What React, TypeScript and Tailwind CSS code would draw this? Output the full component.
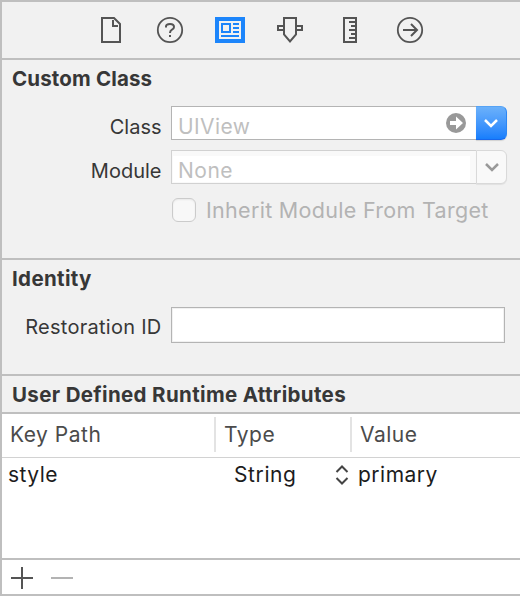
import type { ReactNode } from "react";

function Title({ children }: { children: ReactNode }) {
  return (
    <h2 className="h-6 whitespace-nowrap text-[20.5px] leading-6 font-bold text-[#373737]">{children}</h2>
  );
}

function Label({ children }: { children: ReactNode }) {
  return <span className="block w-[159.5px] shrink-0 whitespace-nowrap text-right text-[20px] leading-6 text-[#373737]">{children}</span>;
}

function Chevron({ color }: { color: string }) {
  return (
    <svg width="14" height="10" viewBox="0 0 14 10" fill="none" stroke={color} strokeWidth="2.5">
      <path d="M1 2 L7 8 L13 2" />
    </svg>
  );
}

function Toolbar() {
  return (
    <nav className="flex h-[58px] shrink-0 items-center border-b-2 border-[#bfbfbf] pl-[94px]">
      <svg width="330" height="30" viewBox="96 15 330 30" fill="none" stroke="#545454" strokeWidth="2">
        <path d="M102 18 H114 L120 24 V42 H102 Z M113 20 V26 H118" />
        <circle cx="170" cy="30" r="12.2" strokeWidth="1.8" />
        <path d="M166 27.5 V26.5 Q166 24 170 24 Q174 24 174 27 Q174 28.7 172 29.7 Q170 30.8 170 33 M170 35 V37" />
        <rect x="215" y="17" width="30" height="26" fill="#1c85fb" stroke="none" />
        <rect x="219" y="21" width="22" height="18" fill="#f1f1f1" stroke="none" />
        <path stroke="#1c85fb" d="M222 24 H230 V32 H222 Z M233 24 H239 M233 28 H239 M233 32 H239 M221 36 H239" />
        <path d="M284 18 H296 V34.5 L290 41.5 L284 34.5 Z M284 26 H278 V30 H284 M296 26 H302 V30 H296" />
        <path d="M344 18 H356 V42 H344 Z M349 22 H356 M351 26 H356 M349 30 H356 M351 34 H356 M349 38 H356" />
        <circle cx="410" cy="30" r="12.2" strokeWidth="1.8" />
        <path d="M403 30 H416 M411 24 L417 30 L411 36" />
      </svg>
    </nav>
  );
}

export default function App() {
  return (
    <main className="flex h-[596px] w-[520px] flex-col overflow-hidden border-y-2 border-l-2 border-[#bfbfbf] bg-[#f1f1f1] font-['Inter','Liberation_Sans',sans-serif]">
      <Toolbar />
      <section className="h-[200px] shrink-0 border-b-2 border-[#bfbfbf]">
        <div className="pt-[7px] pl-[10px] tracking-[0.15px]">
          <Title>Custom Class</Title>
        </div>
        <div className="mt-[15px] flex h-[34px]">
          <div className="pt-[9px]"><Label>Class</Label></div>
          <div className="ml-auto flex w-[305px] items-center justify-between border border-r-0 border-[#b4b4b4] bg-white pr-[10px] pl-[6px] text-[21px] tracking-[0.4px] text-[#bfbfbf]">
            <span className="mt-[7px] leading-6">UIView</span>
            <svg width="20" height="20" viewBox="0 0 20 20">
              <circle cx="10" cy="10" r="10" fill="#999" />
              <path d="M4 8 H10 V3.5 L17 10 L10 16.5 V12 H4 Z" fill="white" />
            </svg>
          </div>
          <div className="mr-[13px] flex w-[31px] shrink-0 items-center justify-center rounded-r-md border border-l-0 border-t-[#56a3f5] border-r-[#2c87f5] border-b-[#1768ed] bg-linear-to-b from-[#6bb1fa] to-[#167efc] shadow-[0_1px_1px_#0002]">
            <Chevron color="white" />
          </div>
        </div>
        <div className="mt-[10px] flex h-[34px]">
          <div className="pt-[9px]"><Label>Module</Label></div>
          <div className="ml-auto flex w-[305px] border border-r-0 border-[#d1d1d1] bg-[#f9f9f9] pt-[5px] pr-[6px] pb-px pl-px text-[21px] tracking-[0.5px] text-[#bfbfbf]">
            <div className="flex-1 bg-white pt-[3px] pl-[5px] leading-6">None</div>
          </div>
          <div className="mr-[13px] flex w-[31px] shrink-0 items-center justify-center rounded-r-md border border-[#d9d9d9] bg-[#f9f9f9] shadow-[0_1px_1px_#0001]">
            <Chevron color="#999" />
          </div>
        </div>
        <div className="mt-[14px] flex pl-[170px]">
          <div className="size-6 shrink-0 rounded-md border border-[#cbcbcb] bg-[#f8f8f8] shadow-[inset_0_1px_2px_#0001]" />
          <span className="ml-[10px] whitespace-nowrap text-[21.5px] leading-6 tracking-[0.3px] text-[#b3b3b3]">Inherit Module From Target</span>
        </div>
      </section>
      <section className="h-[116px] shrink-0 border-b-2 border-[#bfbfbf]">
        <div className="pt-[7px] pl-[10px] tracking-[0.35px]">
          <Title>Identity</Title>
        </div>
        <div className="mt-[16px] flex h-[36px]">
          <div className="pt-[8px] tracking-[0.27px]"><Label>Restoration ID</Label></div>
          <div className="mr-[15px] ml-auto w-[334px] border border-[#b4b4b4] bg-white shadow-[inset_0_0_0_1px_#f1f1f1]" />
        </div>
      </section>
      <section className="flex min-h-0 flex-1 flex-col">
        <div className="h-[38px] shrink-0 border-b-2 border-[#bfbfbf] pt-[7px] pl-[10px] tracking-[0.35px]">
          <Title>User Defined Runtime Attributes</Title>
        </div>
        <div className="flex h-11 shrink-0 border-b border-[#d2d2d2] bg-white pt-[3px] text-[21px] leading-[36px] tracking-[0.5px] text-[#4b4b4b]">
          <div className="h-[35px] w-[214px] border-r-2 border-[#e3e3e3] pl-[8px]">Key Path</div>
          <div className="h-[35px] w-[136px] border-r-2 border-[#e3e3e3] pl-[8px]">Type</div>
          <div className="pl-[8px]">Value</div>
        </div>
        <div className="h-[102px] shrink-0 border-b-2 border-[#bfbfbf] bg-white">
          <div className="flex h-[34px] items-center text-[21px] tracking-[0.5px] text-[#1c1c1c]">
            <span className="w-[232px] pl-[6px]">style</span>
            <span className="w-[101px] tracking-[0.6px]">String</span>
            <svg width="14" height="22" viewBox="0 0 14 22" fill="none" stroke="#444" strokeWidth="2">
              <path d="M1.5 8 L7 2.5 L12.5 8 M1.5 14 L7 19.5 L12.5 14" />
            </svg>
            <span className="pl-[9px]">primary</span>
          </div>
        </div>
        <div className="flex flex-1 items-center gap-[18px] bg-white pt-[2px] pl-[9px]">
          <svg width="22" height="22" viewBox="0 0 22 22" stroke="#545454" strokeWidth="2">
            <path d="M0 11 H22 M11 0 V22" />
          </svg>
          <svg width="22" height="22" viewBox="0 0 22 22" stroke="#b3b3b3" strokeWidth="2">
            <path d="M0 11 H22" />
          </svg>
        </div>
      </section>
    </main>
  );
}
